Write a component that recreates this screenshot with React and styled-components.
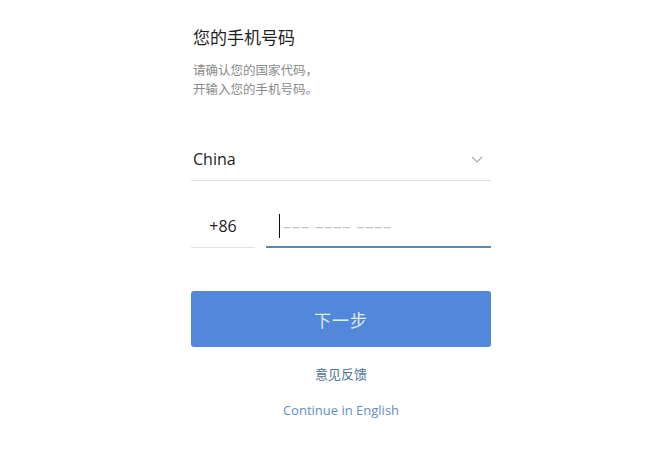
import React from "react";
import styled, { createGlobalStyle } from "styled-components";

const GlobalStyle = createGlobalStyle`
  html, body {
    margin: 0;
    padding: 0;
    background: #ffffff;
  }
  body {
    font-family: "Open Sans", "Noto Sans CJK SC", sans-serif;
    color: #222222;
  }
`;

const Page = styled.div`
  padding: 26px 0 0 191px;
`;

const Column = styled.div`
  width: 300px;
  display: flex;
  flex-direction: column;
`;

const Title = styled.h1`
  margin: 0 0 0 2px;
  font-size: 17px;
  line-height: 24px;
  font-weight: 400;
  color: #1f1f1f;
`;

const Hint = styled.p`
  margin: 10.5px 0 0 2px;
  font-size: 12.5px;
  line-height: 19px;
  color: #8a8a8a;
`;

const CountryRow = styled.div`
  margin-top: 48.5px;
  display: flex;
  align-items: center;
  justify-content: space-between;
  padding: 0 8px 9px 2px;
  border-bottom: 1px solid #dedede;
  font-size: 16px;
  line-height: 24px;
  color: #222;
`;

const PhoneRow = styled.div`
  margin-top: 33px;
  display: flex;
  align-items: flex-end;
  gap: 11px;
`;

const Prefix = styled.div`
  width: 64px;
  text-align: center;
  font-size: 16px;
  line-height: 24px;
  padding-bottom: 9px;
  border-bottom: 1px solid #e2e2e2;
  color: #222;
`;

const PhoneField = styled.div`
  flex: 1;
  display: flex;
  align-items: center;
  height: 24px;
  padding: 0 0 8px 13px;
  border-bottom: 2px solid ${(p) => (p.$focused ? "#5f87aa" : "#e2e2e2")};
`;

const Caret = styled.span`
  width: 1px;
  height: 24px;
  background: #111;
`;

const Placeholder = styled.span`
  margin-left: 3px;
  font-size: 16px;
  line-height: 24px;
  letter-spacing: 1px;
  color: #c2c2c2;
`;

const NextButton = styled.button`
  margin-top: 43px;
  height: 56px;
  border: none;
  border-radius: 3px;
  background: #5288d9;
  color: rgba(255, 255, 255, 0.85);
  font-family: inherit;
  font-size: 17px;
  letter-spacing: 1px;
  cursor: pointer;
`;

const TextLink = styled.a`
  display: block;
  text-align: center;
  margin-top: ${(p) => p.$gap}px;
  font-size: 13px;
  line-height: 20px;
  color: ${(p) => p.$color};
  text-decoration: none;
  cursor: pointer;
`;

const Chevron = () => (
  <svg width="12" height="7" viewBox="0 0 12 7" fill="none">
    <path d="M1 1l5 5 5-5" stroke="#b0b0b0" strokeWidth="1.3" />
  </svg>
);

export default function App() {
  return (
    <>
      <GlobalStyle />
      <Page>
        <Column>
          <Title>您的手机号码</Title>
          <Hint>
            请确认您的国家代码，
            <br />
            开输入您的手机号码。
          </Hint>
          <CountryRow>
            <span>China</span>
            <Chevron />
          </CountryRow>
          <PhoneRow>
            <Prefix>+86</Prefix>
            <PhoneField $focused>
              <Caret />
              <Placeholder>––– –––– ––––</Placeholder>
            </PhoneField>
          </PhoneRow>
          <NextButton>下一步</NextButton>
          <TextLink $gap={17} $color="#4d7499">意见反馈</TextLink>
          <TextLink $gap={16} $color="#6390c2">Continue in English</TextLink>
        </Column>
      </Page>
    </>
  );
}
